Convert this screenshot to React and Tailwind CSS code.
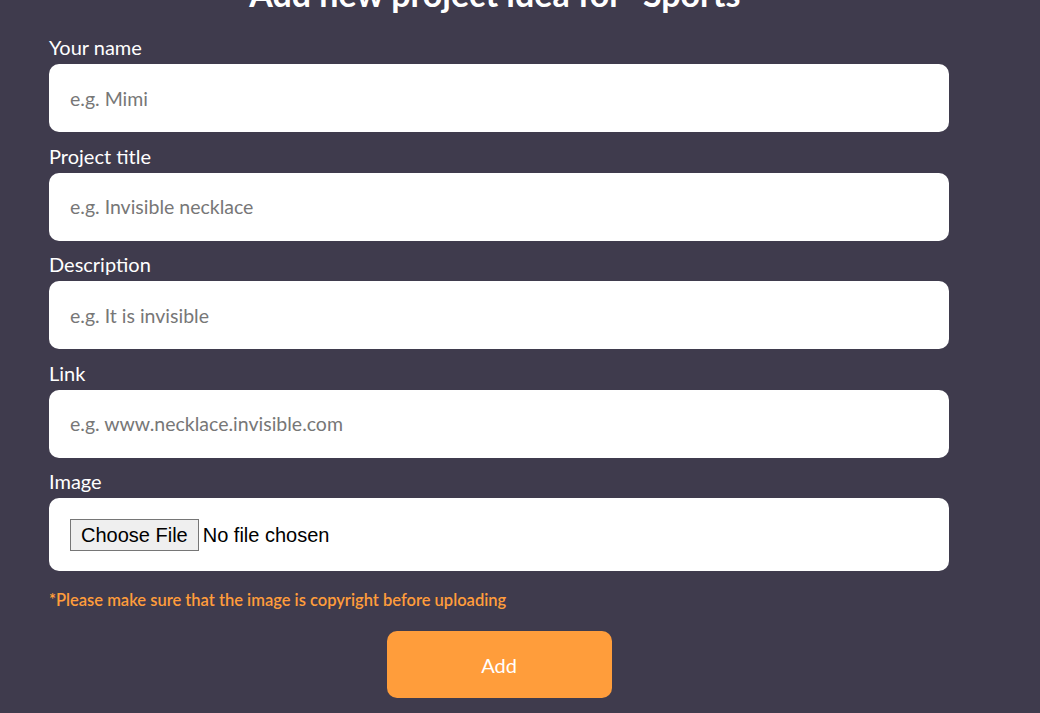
import { useState } from 'react'

const fields = [
  { label: 'Your name', placeholder: 'e.g. Mimi' },
  { label: 'Project title', placeholder: 'e.g. Invisible necklace' },
  { label: 'Description', placeholder: 'e.g. It is invisible' },
  { label: 'Link', placeholder: 'e.g. www.necklace.invisible.com' },
]

function App() {
  const [values, setValues] = useState({})

  return (
    <div className="min-h-screen bg-[#3f3b4d] overflow-hidden" style={{ fontFamily: '"Lato", "Open Sans", sans-serif' }}>
      <div className="w-[900px] ml-[49px]">
        <h1 className="text-center text-white font-bold text-[34px] leading-[40px] mt-[-26px] pl-[5px]">
          Add new project idea for "Sports"
        </h1>

        <form onSubmit={(e) => e.preventDefault()} className="flex flex-col mt-[21px]">
          {fields.map((f) => (
            <div key={f.label} className="flex flex-col mb-[11.5px]">
              <label className="text-white text-[20px] leading-[24px] mb-[5px]">{f.label}</label>
              <input
                type="text"
                value={values[f.label] || ''}
                onChange={(e) => setValues({ ...values, [f.label]: e.target.value })}
                placeholder={f.placeholder}
                className="h-[68px] w-full bg-white rounded-[10px] px-[21px] text-[19.5px] text-[#222] placeholder:text-[#777] outline-none"
              />
            </div>
          ))}

          <div className="flex flex-col">
            <label className="text-white text-[20px] leading-[24px] mb-[5px]">Image</label>
            <div className="h-[73px] w-full bg-white rounded-[10px] px-[21px] flex items-center">
              <input
                type="file"
                className="text-[20px] text-black file:text-[20px] file:bg-[#efefef] file:border file:border-[#767676] file:px-[10px] file:py-0 file:mr-[4px] file:rounded-none"
                style={{ fontFamily: '"Liberation Sans", Arial, sans-serif' }}
              />
            </div>
          </div>

          <p className="text-[#ff9d3b] text-[16.5px] font-semibold leading-[20px] mt-[19px]">
            *Please make sure that the image is copyright before uploading
          </p>

          <div className="flex justify-center mt-[21px]">
            <button
              type="submit"
              className="w-[225px] h-[67px] bg-[#ff9d3b] rounded-[10px] text-white text-[20px]"
            >
              Add
            </button>
          </div>
        </form>
      </div>
    </div>
  )
}

export default App
